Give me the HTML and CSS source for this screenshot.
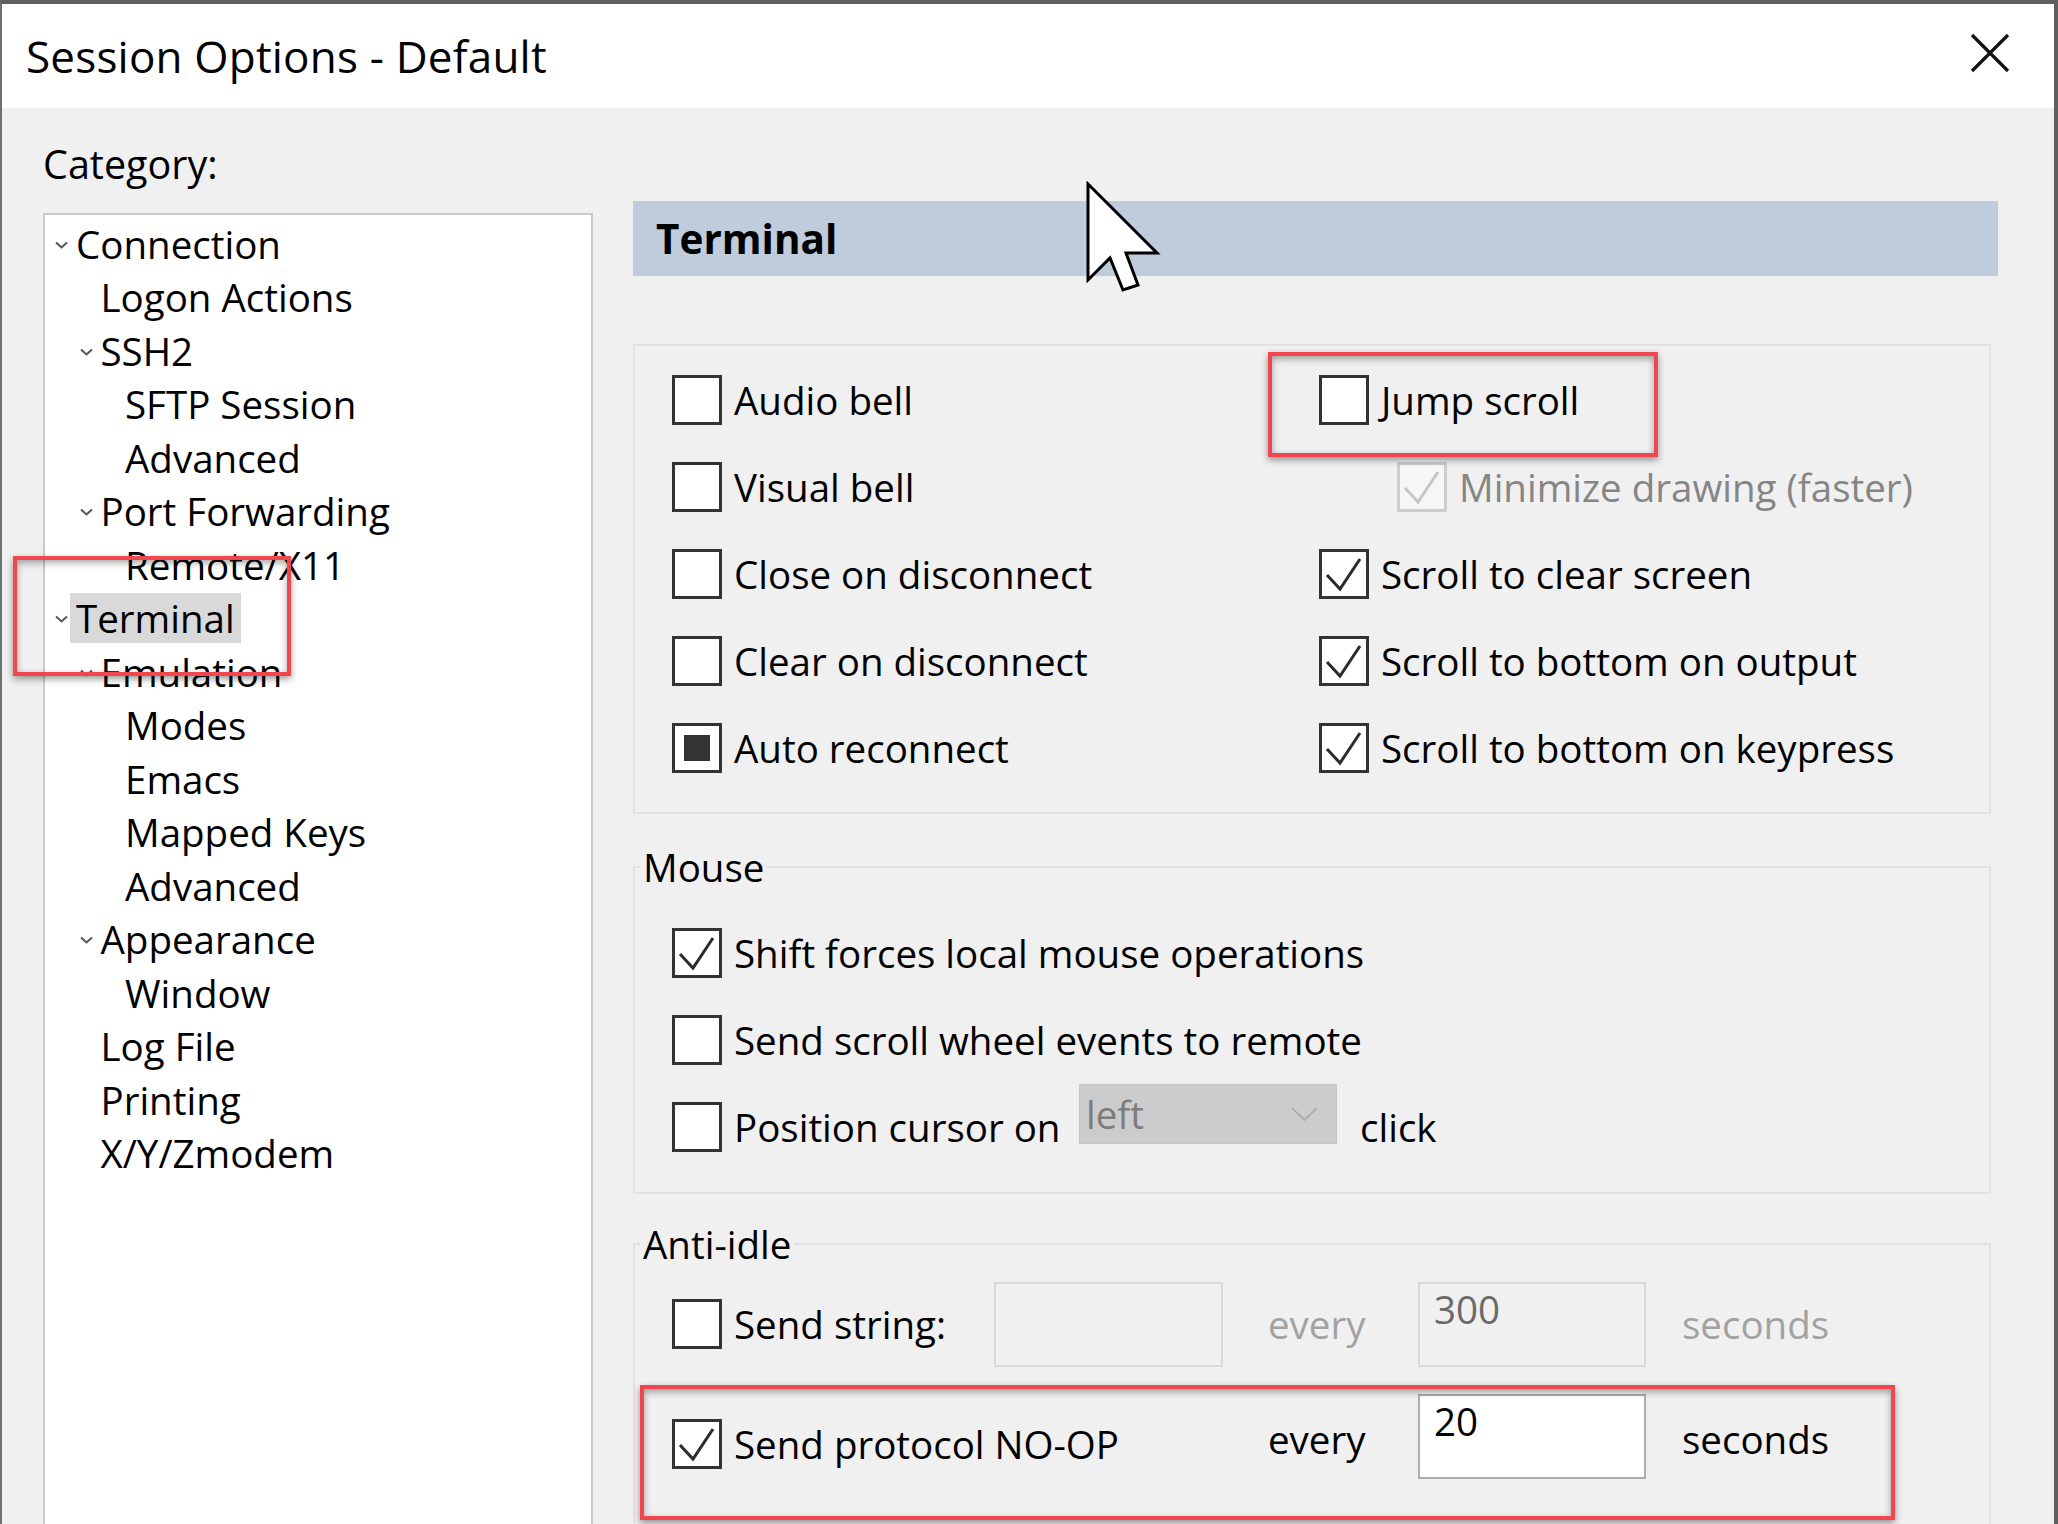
FILE: index.html
```html
<!DOCTYPE html>
<html lang="en">
<head>
<meta charset="utf-8">
<title>Session Options - Default</title>
<link rel="stylesheet" href="styles.css">
</head>
<body>
<div class="window">
  <div class="titlebar">
    <span class="title">Session Options - Default</span>
    <svg class="close" width="40" height="40" viewBox="0 0 40 40"><path d="M2 2 L38 38 M38 2 L2 38" stroke="#111" stroke-width="3.2" fill="none"/></svg>
  </div>
  <div class="main">
    <div class="left">
      <div class="cat-label">Category:</div>
      <div class="tree">
        <div class="node l0"><span class="chev"><svg width="13" height="8" viewBox="0 0 13 8"><path d="M1 1.5 L6.5 6.5 L12 1.5" stroke="#555" stroke-width="2" fill="none"/></svg></span><span class="lbl">Connection</span></div>
        <div class="node l1"><span class="chev"></span><span class="lbl">Logon Actions</span></div>
        <div class="node l1"><span class="chev"><svg width="13" height="8" viewBox="0 0 13 8"><path d="M1 1.5 L6.5 6.5 L12 1.5" stroke="#555" stroke-width="2" fill="none"/></svg></span><span class="lbl">SSH2</span></div>
        <div class="node l2"><span class="chev"></span><span class="lbl">SFTP Session</span></div>
        <div class="node l2"><span class="chev"></span><span class="lbl">Advanced</span></div>
        <div class="node l1"><span class="chev"><svg width="13" height="8" viewBox="0 0 13 8"><path d="M1 1.5 L6.5 6.5 L12 1.5" stroke="#555" stroke-width="2" fill="none"/></svg></span><span class="lbl">Port Forwarding</span></div>
        <div class="node l2"><span class="chev"></span><span class="lbl">Remote/X11</span></div>
        <div class="node l0"><span class="chev"><svg width="13" height="8" viewBox="0 0 13 8"><path d="M1 1.5 L6.5 6.5 L12 1.5" stroke="#555" stroke-width="2" fill="none"/></svg></span><span class="lbl sel">Terminal</span></div>
        <div class="node l1"><span class="chev"><svg width="13" height="8" viewBox="0 0 13 8"><path d="M1 1.5 L6.5 6.5 L12 1.5" stroke="#555" stroke-width="2" fill="none"/></svg></span><span class="lbl">Emulation</span></div>
        <div class="node l2"><span class="chev"></span><span class="lbl">Modes</span></div>
        <div class="node l2"><span class="chev"></span><span class="lbl">Emacs</span></div>
        <div class="node l2"><span class="chev"></span><span class="lbl">Mapped Keys</span></div>
        <div class="node l2"><span class="chev"></span><span class="lbl">Advanced</span></div>
        <div class="node l1"><span class="chev"><svg width="13" height="8" viewBox="0 0 13 8"><path d="M1 1.5 L6.5 6.5 L12 1.5" stroke="#555" stroke-width="2" fill="none"/></svg></span><span class="lbl">Appearance</span></div>
        <div class="node l2"><span class="chev"></span><span class="lbl">Window</span></div>
        <div class="node l1"><span class="chev"></span><span class="lbl">Log File</span></div>
        <div class="node l1"><span class="chev"></span><span class="lbl">Printing</span></div>
        <div class="node l1"><span class="chev"></span><span class="lbl">X/Y/Zmodem</span></div>
      </div>
    </div>

    <div class="right">
      <div class="header">Terminal</div>

      <div class="group1">
        <div class="opt"><span class="cb"></span><span>Audio bell</span></div>
        <div class="opt"><span class="cb"></span><span>Jump scroll</span></div>

        <div class="opt"><span class="cb"></span><span>Visual bell</span></div>
        <div class="opt sub disabled"><span class="cb"><svg class="tick" viewBox="0 0 44 44"><path d="M5 23 L18 37 L38 7" fill="none"/></svg></span><span>Minimize drawing (faster)</span></div>

        <div class="opt"><span class="cb"></span><span>Close on disconnect</span></div>
        <div class="opt"><span class="cb"><svg class="tick" viewBox="0 0 44 44"><path d="M5 23 L18 37 L38 7" fill="none"/></svg></span><span>Scroll to clear screen</span></div>

        <div class="opt"><span class="cb"></span><span>Clear on disconnect</span></div>
        <div class="opt"><span class="cb"><svg class="tick" viewBox="0 0 44 44"><path d="M5 23 L18 37 L38 7" fill="none"/></svg></span><span>Scroll to bottom on output</span></div>

        <div class="opt"><span class="cb"><span class="indet"></span></span><span>Auto reconnect</span></div>
        <div class="opt"><span class="cb"><svg class="tick" viewBox="0 0 44 44"><path d="M5 23 L18 37 L38 7" fill="none"/></svg></span><span>Scroll to bottom on keypress</span></div>
      </div>

      <fieldset class="group mouse">
        <legend>Mouse</legend>
        <div class="opt"><span class="cb"><svg class="tick" viewBox="0 0 44 44"><path d="M5 23 L18 37 L38 7" fill="none"/></svg></span><span>Shift forces local mouse operations</span></div>
        <div class="opt"><span class="cb"></span><span>Send scroll wheel events to remote</span></div>
        <div class="opt">
          <div class="pos-label"><span class="cb"></span><span>Position cursor on</span></div>
          <div class="dropdown"><span>left</span><svg width="27" height="14" viewBox="0 0 27 14"><path d="M1 1 L13.5 13 L26 1" stroke="#a8a8a8" stroke-width="1.6" fill="none"/></svg></div>
          <span class="click">click</span>
        </div>
      </fieldset>

      <fieldset class="group anti">
        <legend>Anti-idle</legend>
        <div class="anti-grid">
          <div class="opt"><span class="cb"></span><span>Send string:</span></div>
          <div class="field off"></div>
          <div class="every off-text">every</div>
          <div class="field off"><span>300</span></div>
          <div class="secs off-text">seconds</div>

          <div class="opt span2"><span class="cb"><svg class="tick" viewBox="0 0 44 44"><path d="M5 23 L18 37 L38 7" fill="none"/></svg></span><span>Send protocol NO-OP</span></div>
          <div class="every up">every</div>
          <div class="field on raise"><span>20</span></div>
          <div class="secs up">seconds</div>
        </div>
      </fieldset>
    </div>
  </div>

  <div class="mark mark-tree"></div>
  <div class="mark mark-jump"></div>
  <div class="mark mark-noop"></div>

  <svg class="cursor" width="76" height="113" viewBox="0 0 76 113"><path d="M3 3 L3 99 L25 77 L38 109 L53 104 L41 72 L72 72 Z" fill="#fff" stroke="#000" stroke-width="3" stroke-linejoin="miter"/></svg>
</div>
</body>
</html>
```

FILE: styles.css
```css
html, body {
  margin: 0;
  padding: 0;
  width: 2058px;
  height: 1524px;
  overflow: hidden;
  background: #f0f0f0;
}

body {
  font-family: "Open Sans", "Noto Sans", sans-serif;
  font-size: 38.5px;
  color: #000;
}

.window {
  position: relative;
  width: 2058px;
  height: 1524px;
  box-sizing: border-box;
  border-top: 4px solid #5f5f5f;
  border-left: 2px solid #707070;
  border-right: 4px solid #5f5f5f;
  background: #f0f0f0;
  overflow: hidden;
}

/* Title bar */
.titlebar {
  height: 104px;
  background: #fff;
  display: flex;
  align-items: center;
  justify-content: space-between;
  padding: 0 44px 0 24px;
}

.title {
  font-size: 44px;
  color: #000;
  letter-spacing: 0.2px;
}

.close {
  display: block;
  margin-top: -6px;
}

/* Main area */
.main {
  display: flex;
  align-items: flex-start;
}

.left {
  width: 591px;
  flex: none;
  padding-left: 41px;
  box-sizing: border-box;
}

.cat-label {
  margin-top: 29px;
  height: 54px;
  line-height: 54px;
  font-size: 39.5px;
}

.tree {
  margin-top: 22px;
  width: 550px;
  height: 1400px;
  box-sizing: border-box;
  border: 2px solid #cacaca;
  background: #fff;
  padding-top: 2px;
}

.node {
  height: 53.5px;
  display: flex;
  align-items: center;
  white-space: nowrap;
}

.node.l0 { padding-left: 10px; }
.node.l1 { padding-left: 34.5px; }
.node.l2 { padding-left: 59px; }

.chev {
  width: 15px;
  flex: none;
  display: flex;
  align-items: center;
  padding-top: 2px;
}

.chev svg { display: block; }

.lbl {
  display: block;
  padding: 0 6px;
  height: 50px;
  line-height: 50px;
}

.lbl.sel {
  background: #d9d9d9;
}

/* Right side */
.right {
  margin-left: 40px;
  width: 1365px;
  flex: none;
}

.header {
  margin-top: 93px;
  height: 75px;
  line-height: 75px;
  background: #bfccdc;
  padding-left: 23px;
  font-weight: 700;
  font-size: 40.5px;
}

.group1 {
  margin-top: 68px;
  width: 1358px;
  height: 470px;
  box-sizing: border-box;
  border: 2px solid #e1e1e1;
  padding: 10px 0 0 37px;
  display: grid;
  grid-template-columns: 647px 1fr;
  grid-auto-rows: 87px;
}

.opt {
  display: flex;
  align-items: center;
  gap: 12px;
  white-space: nowrap;
}

.opt.sub {
  padding-left: 78px;
}

.cb {
  width: 50px;
  height: 50px;
  box-sizing: border-box;
  border: 3px solid #333;
  background: #fff;
  flex: none;
  display: flex;
  align-items: center;
  justify-content: center;
}

.tick {
  width: 44px;
  height: 44px;
  display: block;
}

.tick path {
  stroke: #2b2b2b;
  stroke-width: 3;
  stroke-linejoin: miter;
}

.indet {
  width: 26px;
  height: 26px;
  background: #333;
  display: block;
}

.disabled {
  color: #858585;
}

.disabled .cb {
  border-color: #cdcdcd;
  background: #f6f6f6;
}

.disabled .tick path {
  stroke: #c6c6c6;
}

/* Fieldset groups */
.group {
  margin: 0;
  width: 1358px;
  box-sizing: border-box;
  border: 2px solid #e1e1e1;
  min-width: 0;
}

.group legend {
  padding: 0 3px;
  margin-left: -32px;
  line-height: 54px;
  height: 54px;
}

.mouse {
  margin-top: 26px;
  padding: 15px 0 22px 37px;
}

.mouse .opt {
  height: 87px;
}

.pos-label {
  width: 407px;
  flex: none;
  display: flex;
  align-items: center;
  gap: 12px;
}

.mouse .opt .pos-label + .dropdown {
  margin-left: -12px;
}

.dropdown {
  width: 258px;
  height: 60px;
  box-sizing: border-box;
  background: #cccccc;
  border: 1px solid #c6c6c6;
  display: flex;
  align-items: flex-start;
  justify-content: space-between;
  padding: 4px 18px 0 6px;
  color: #7d7d7d;
  line-height: 50px;
  margin-bottom: 26px;
}

.dropdown svg {
  margin-top: 18px;
  display: block;
}

.click {
  margin-left: 11px;
}

.anti {
  margin-top: 23px;
  padding: 0 0 0 37px;
  height: 320px;
}

.anti-grid {
  display: grid;
  grid-template-columns: 322px 229px 195px 228px 1fr;
  grid-template-rows: 106px 134px;
  align-items: center;
}

.span2 {
  grid-column: 1 / span 2;
}

.field {
  height: 85px;
  box-sizing: border-box;
  border: 2px solid #dadada;
  padding: 3px 14px 0;
  line-height: 44px;
}

.field.off {
  background: #f0f0f0;
  color: #6a6a6a;
}

.field.on {
  background: #fff;
  border-color: #adadad;
  color: #000;
}

.field.raise {
  margin-bottom: 16px;
}

.every {
  padding-left: 45px;
}

.secs {
  padding-left: 36px;
}

.off-text {
  color: #a2a2a2;
}

.up {
  margin-bottom: 10px;
}

/* Annotation overlays */
.mark {
  position: absolute;
  box-sizing: border-box;
  border: 4px solid #f2464f;
  box-shadow: 0 3px 7px rgba(0, 0, 0, 0.4), inset 0 3px 7px rgba(0, 0, 0, 0.35);
  pointer-events: none;
}

.mark-tree {
  left: 11px;
  top: 552px;
  width: 278px;
  height: 120px;
}

.mark-jump {
  left: 1266px;
  top: 348px;
  width: 390px;
  height: 105px;
}

.mark-noop {
  left: 638px;
  top: 1381px;
  width: 1255px;
  height: 135px;
}

.cursor {
  position: absolute;
  left: 1083px;
  top: 177px;
}
```
